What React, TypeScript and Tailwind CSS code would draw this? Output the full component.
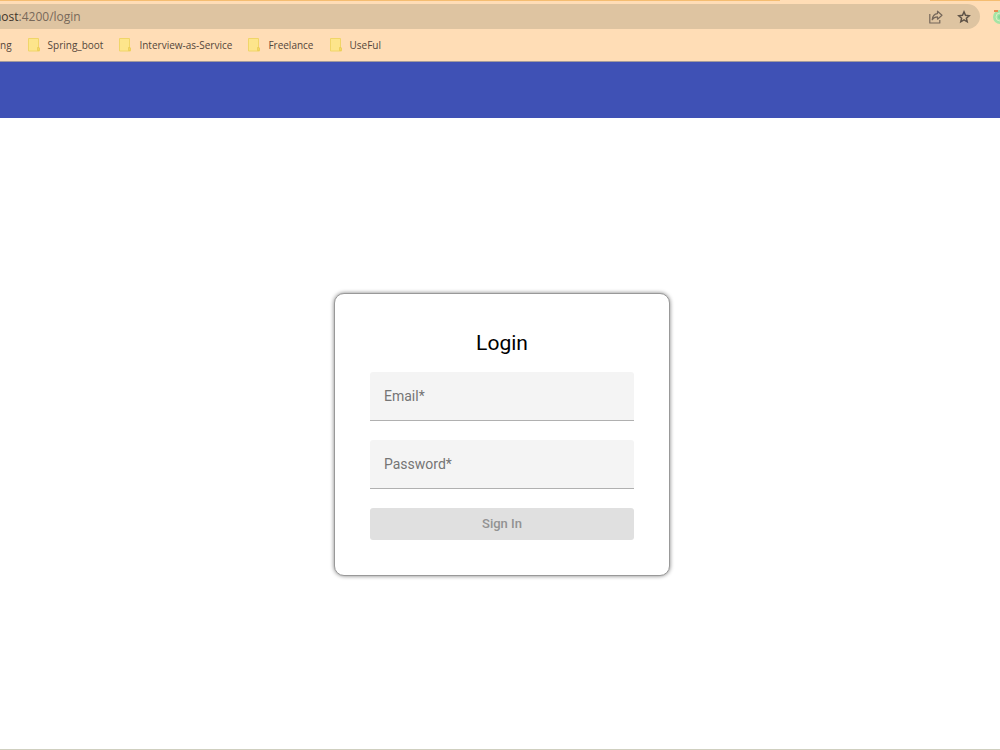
import { useState } from "react";

const bookmarks = ["Spring_boot", "Interview-as-Service", "Freelance", "UseFul"];

export default function App() {
  return (
    <div className="min-h-screen flex flex-col bg-white overflow-x-hidden">
      <BrowserBar />
      <header className="h-14 shrink-0 bg-[#3f51b5]" />
      <main className="flex-1 flex items-center justify-center pt-0.5 pl-1 border-b border-[#cfcfbf] font-['Roboto',sans-serif]">
        <LoginCard />
      </main>
    </div>
  );
}

function BrowserBar() {
  return (
    <div className="shrink-0 bg-[#ffddb6] border-b border-[#a39a9c] font-['Open_Sans',sans-serif] text-[#54463a]">
      {/* Tab strip edge */}
      <div className="flex justify-between h-1">
        <div className="h-px w-[78%] bg-[#f5bd71]" />
        <div className="h-px w-[7%] bg-[#f5bd71]" />
      </div>

      {/* Address bar */}
      <div className="flex items-center justify-between h-[25px]">
        <div className="flex flex-1 items-center h-full pr-2 rounded-r-full bg-[#dec4a1] overflow-hidden">
          <label htmlFor="url" className="-ml-1.5 text-xs text-[#40352b]">host</label>
          <input
            id="url"
            type="text"
            defaultValue=":4200/login"
            className="flex-1 min-w-0 text-xs text-[#78695a] bg-transparent outline-none"
          />
          <button type="button" aria-label="Share" className="mr-3">
            <ShareIcon />
          </button>
          <button type="button" aria-label="Bookmark this tab">
            <StarIcon />
          </button>
        </div>
        <button type="button" aria-label="Extension" className="w-2 ml-3 overflow-hidden">
          <ExtensionIcon />
        </button>
      </div>

      {/* Bookmarks */}
      <nav className="flex items-center gap-4 h-8 text-[10px]">
        <a href="#">ng</a>
        {bookmarks.map((name) => (
          <a key={name} href="#" className="flex items-center gap-2 whitespace-nowrap">
            <FolderIcon />
            {name}
          </a>
        ))}
      </nav>
    </div>
  );
}

function LoginCard() {
  const [email, setEmail] = useState("");
  const [password, setPassword] = useState("");

  return (
    <form
      onSubmit={(e) => e.preventDefault()}
      className="w-84 p-[35px] flex flex-col gap-[19px] bg-white border border-[#999999] rounded-[10px] shadow-[0_0_4px_#808080]"
    >
      <h1 className="h-6 text-center text-[21px] leading-7 text-black">Login</h1>
      <Field id="email" type="email" label="Email" value={email} onChange={setEmail} />
      <Field id="password" type="password" label="Password" value={password} onChange={setPassword} />
      <button
        type="submit"
        disabled={!email || !password}
        className="h-8 rounded-[3px] bg-[#3f51b5] text-white text-[13px] font-medium disabled:bg-[#e0e0e0] disabled:text-[#929292]"
      >
        Sign In
      </button>
    </form>
  );
}

type FieldProps = {
  id: string;
  type: string;
  label: string;
  value: string;
  onChange: (value: string) => void;
};

function Field({ id, type, label, value, onChange }: FieldProps) {
  return (
    <div className="relative">
      <input
        id={id}
        type={type}
        value={value}
        onChange={(e) => onChange(e.target.value)}
        placeholder=" "
        required
        className="peer block w-full h-[49px] px-3.5 pt-4 text-sm bg-[#f4f4f4] border-b border-[#b0b0b0] rounded-t-[3px] outline-none"
      />
      <label
        htmlFor={id}
        className="absolute left-3.5 top-1 text-[10px] leading-5 text-[#757575] pointer-events-none peer-placeholder-shown:top-3.5 peer-placeholder-shown:text-sm/5"
      >
        {label}*
      </label>
    </div>
  );
}

function ShareIcon() {
  return (
    <svg width="16" height="16" viewBox="0 0 16 16" fill="none" stroke="#75675a" strokeWidth="1.2" strokeLinejoin="round">
      <path d="M1.8 5v9h10v-3" />
      <path d="M9.5 2.2 14 6.2l-4.5 4V7.8C7 7.8 5.3 8.800 4.2 10.8 4.5 7.2 6.5 4.9 9.5 4.6z" />
    </svg>
  );
}

function StarIcon() {
  return (
    <svg width="16" height="16" viewBox="0 0 16 16" fill="none" stroke="#5f5347" strokeWidth="1.5">
      <path d="m8 2.9 1.5 3.4 3.7.4-2.8 2.5.8 3.6L8 10.9l-3.2 1.900.8-3.6-2.8-2.5 3.7-.4z" />
    </svg>
  );
}

function ExtensionIcon() {
  return (
    <svg width="16" height="16" viewBox="0 0 16 16" fill="none">
      <circle cx="8" cy="8" r="7" fill="#a5e4a5" />
      <circle cx="8" cy="8" r="4" stroke="#d9efc2" />
      <circle cx="8" cy="8" r="2" fill="#82da96" />
      <path d="M2 1h4v2H2z" fill="#e88b50" />
    </svg>
  );
}

function FolderIcon() {
  return (
    <svg width="12" height="14" viewBox="0 0 12 14">
      <path d="M.5.5h10v9.5h1v3H.5z" fill="#fde58b" stroke="#f0d568" />
      <path d="M9.5 9.5H11v3H9.5z" fill="#f9df72" stroke="#e8c94f" strokeWidth=".7" />
    </svg>
  );
}
